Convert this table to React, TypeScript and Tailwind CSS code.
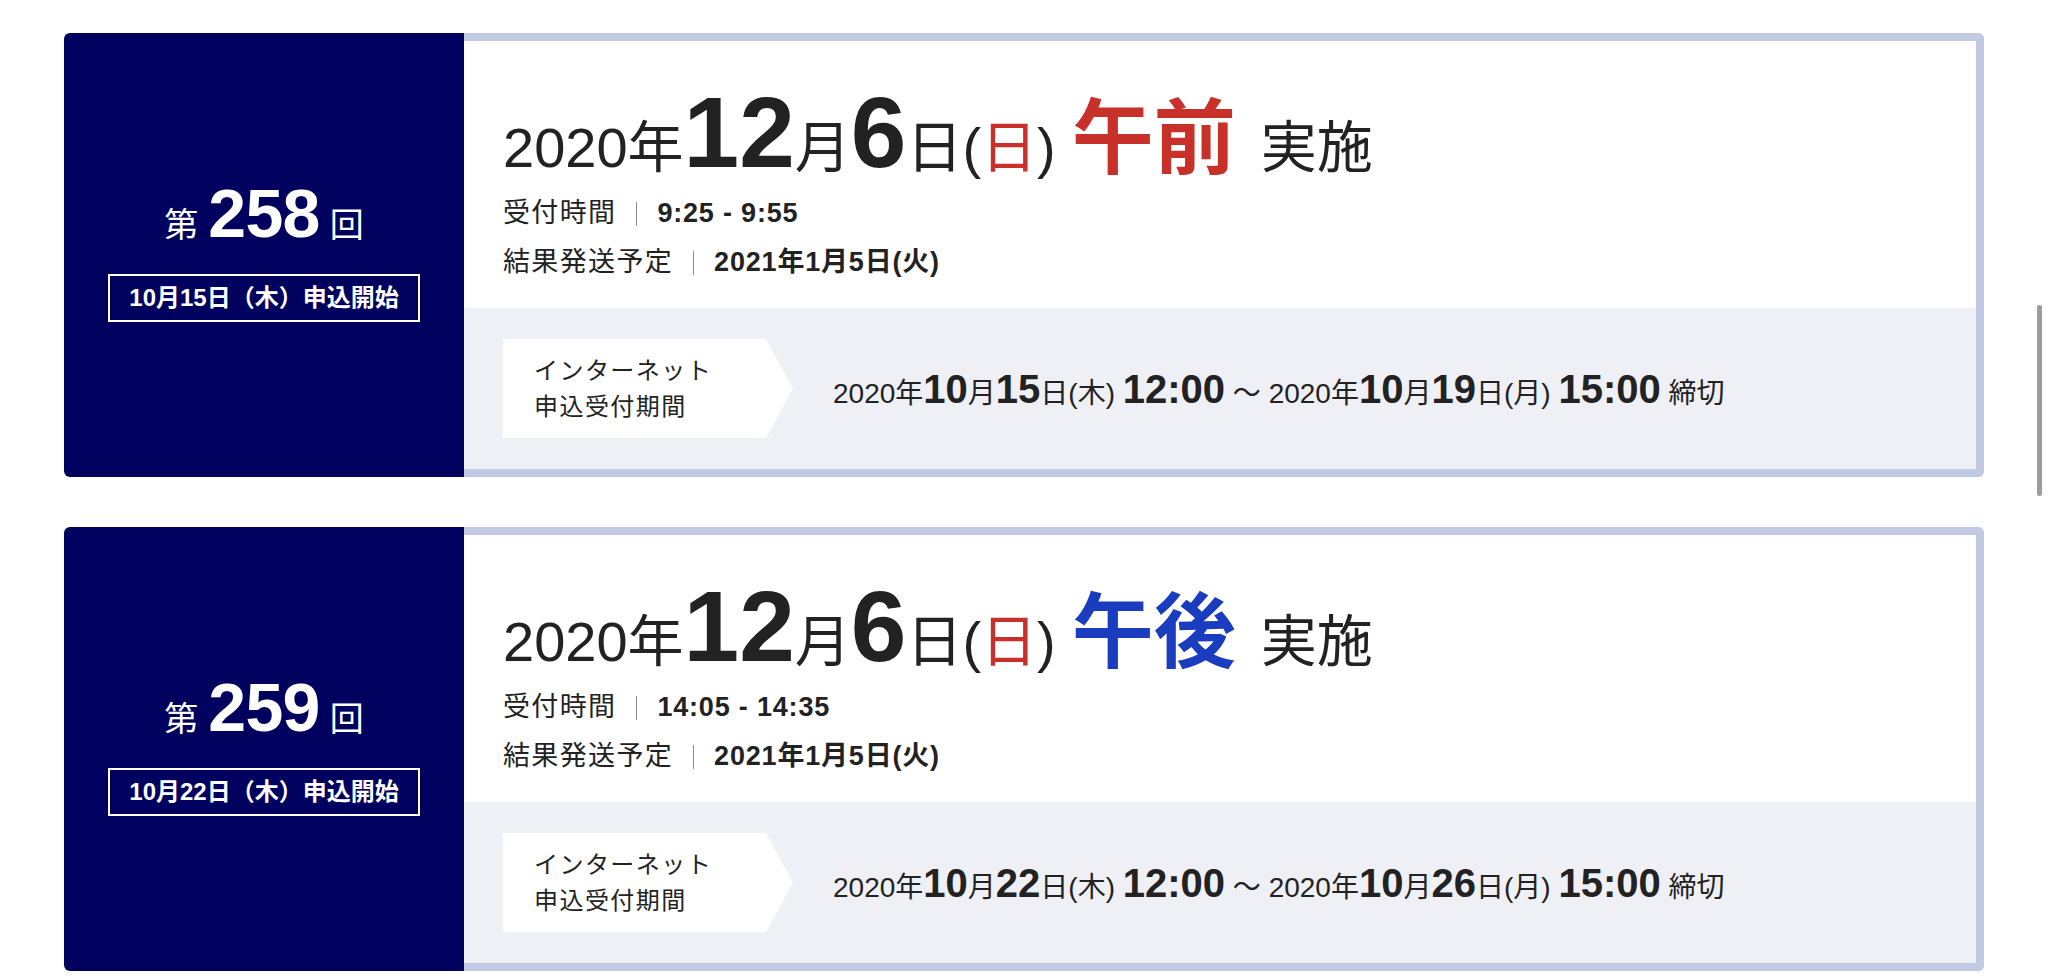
import React from "react";

type Period = { m: string; d: string; w: string; t: string };
type Exam = {
  no: string;
  start: string;
  ampm: string;
  ampmClass: string;
  time: string;
  result: string;
  from: Period;
  to: Period;
};

const exams: Exam[] = [
  {
    no: "258",
    start: "10月15日（木）申込開始",
    ampm: "午前",
    ampmClass: "text-[#c8302a]",
    time: "9:25 - 9:55",
    result: "2021年1月5日(火)",
    from: { m: "10", d: "15", w: "木", t: "12:00" },
    to: { m: "10", d: "19", w: "月", t: "15:00" },
  },
  {
    no: "259",
    start: "10月22日（木）申込開始",
    ampm: "午後",
    ampmClass: "text-[#1a3cbe]",
    time: "14:05 - 14:35",
    result: "2021年1月5日(火)",
    from: { m: "10", d: "22", w: "木", t: "12:00" },
    to: { m: "10", d: "26", w: "月", t: "15:00" },
  },
];

function DateSpan({ p }: { p: Period }) {
  return (
    <>
      <span>2020年</span>
      <span className="text-[40px] font-bold">{p.m}</span>
      <span>月</span>
      <span className="text-[40px] font-bold">{p.d}</span>
      <span>日({p.w})</span>{" "}
      <span className="text-[40px] font-bold">{p.t}</span>
    </>
  );
}

function InfoLine({ label, value }: { label: string; value: string }) {
  return (
    <div className="flex items-center h-[49px] leading-[49px] text-[#222]">
      <span className="text-[27px] tracking-[0.05em]">{label}</span>
      <span className="mx-[20px] w-px h-[24px] bg-[#8c8c8c]" />
      <span className="text-[27px] font-bold tracking-[0.03em]">{value}</span>
    </div>
  );
}

function Card({ e }: { e: Exam }) {
  return (
    <div className="flex h-[444px]">
      <div className="w-[400px] shrink-0 rounded-l-[6px] bg-[#00005e] flex flex-col items-center justify-center text-white">
        <div className="flex items-baseline leading-none">
          <span className="text-[34px]">第</span>
          <span className="mx-[10px] text-[68px] font-bold tracking-[-0.01em]">{e.no}</span>
          <span className="text-[34px]">回</span>
        </div>
        <div className="mt-[27px] mb-[10px] w-[312px] h-[48px] border-2 border-white flex items-center justify-center text-[24px] font-bold leading-none">
          {e.start}
        </div>
      </div>
      <div className="flex-1 flex flex-col border-y-8 border-r-8 border-[#c1c9e3] rounded-r-[6px] overflow-hidden">
        <div className="flex-1 bg-white pl-[39px] pt-[41px]">
          <div className="flex items-baseline leading-none text-[#222]">
            <span className="text-[56px]">2020年</span>
            <span className="text-[100px] font-bold">12</span>
            <span className="text-[56px]">月</span>
            <span className="text-[100px] font-bold">6</span>
            <span className="text-[56px]">
              日(<span className="text-[#c8302a]">日</span>)
            </span>
            <span className={`ml-[16px] text-[82px] font-bold ${e.ampmClass}`}>{e.ampm}</span>
            <span className="ml-[25px] text-[56px]">実施</span>
          </div>
          <div className="mt-[7px]">
            <InfoLine label="受付時間" value={e.time} />
            <InfoLine label="結果発送予定" value={e.result} />
          </div>
        </div>
        <div className="h-[161px] shrink-0 bg-[#eff0f5] pl-[39px] flex items-center">
          <div className="w-[290px] h-[99px] shrink-0 bg-white [clip-path:polygon(0_0,263px_0,100%_50%,263px_100%,0_100%)] flex flex-col justify-center pl-[31px] text-[24px] leading-[36px] tracking-[0.06em] text-[#222]">
            <div>インターネット</div>
            <div>申込受付期間</div>
          </div>
          <div className="ml-[40px] text-[28px] leading-none text-[#222] whitespace-nowrap">
            <DateSpan p={e.from} /> 〜 <DateSpan p={e.to} /> <span>締切</span>
          </div>
        </div>
      </div>
    </div>
  );
}

export default function App() {
  return (
    <div
      className="relative h-[979px] overflow-hidden bg-white"
      style={{ fontFamily: '"Liberation Sans", "Noto Sans CJK JP", sans-serif' }}
    >
      <div className="flex flex-col gap-[50px] px-[64px] pt-[33px]">
        {exams.map((e) => (
          <Card key={e.no} e={e} />
        ))}
      </div>
      <div className="absolute right-[6px] top-[305px] w-[5px] h-[191px] rounded-full bg-[#9c9c9c]" />
    </div>
  );
}
